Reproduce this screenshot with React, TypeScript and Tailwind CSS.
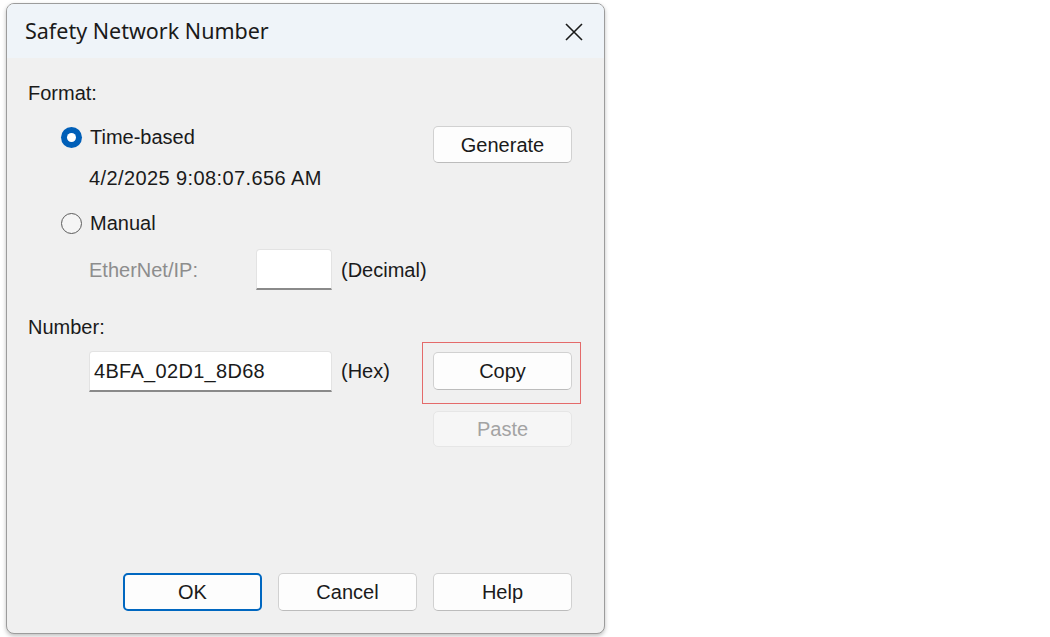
import React from "react"

const bodyFont = { fontFamily: '"Liberation Sans", Arial, sans-serif' }
const titleFont = { fontFamily: '"Segoe UI", "Noto Sans", Arial, sans-serif' }

function Radio({ checked, label }: { checked?: boolean; label: string }) {
  return (
    <div className="flex h-6 items-center">
      {checked ? (
        <span className="flex h-[21px] w-[21px] items-center justify-center rounded-full bg-[#005fb8]">
          <span className="h-[9px] w-[9px] rounded-full bg-white" />
        </span>
      ) : (
        <span className="h-[21px] w-[21px] rounded-full border-[1.5px] border-[#5c5c5c] bg-[#f5f5f5]" />
      )}
      <span className="ml-[8px]">{label}</span>
    </div>
  )
}

function Button({
  children,
  primary,
  disabled,
  className = "",
}: {
  children: React.ReactNode
  primary?: boolean
  disabled?: boolean
  className?: string
}) {
  const tone = primary
    ? "border-2 border-[#0067c0] bg-[#fdfdfd] text-[#1a1a1a]"
    : disabled
      ? "border border-[#e6e6e6] bg-[#f6f6f6] text-[#a3a3a3]"
      : "border border-[#d1d1d1] border-b-[#bcbcbc] bg-[#fdfdfd] text-[#1a1a1a]"
  return (
    <div
      className={`flex w-[139px] items-center justify-center rounded-[5px] ${tone} ${className}`}
    >
      {children}
    </div>
  )
}

function TextBox({ value, className = "" }: { value?: string; className?: string }) {
  return (
    <div
      className={`flex h-[41px] items-center rounded-t-[4px] border border-[#e3e3e3] border-b-2 border-b-[#8a8a8a] bg-white pl-[4px] ${className}`}
    >
      {value}
    </div>
  )
}

export default function App() {
  return (
    <div className="h-[637px] w-[1050px] bg-white pl-[6px] pt-[3px]" style={bodyFont}>
      <div className="flex h-[631px] w-[599px] flex-col overflow-hidden rounded-[8px] border border-[#9c9c9c] bg-[#f0f0f0] text-[20px] text-[#1a1a1a] shadow-[0_2px_4px_rgba(0,0,0,0.25)]">
        {/* title bar */}
        <div className="flex h-[54px] shrink-0 items-center justify-between bg-[#eff4f9] pl-[18px] pr-[20px]">
          <span className="text-[21.5px]" style={titleFont}>
            Safety Network Number
          </span>
          <svg width="20" height="20" viewBox="0 0 20 20" className="mt-[1px]">
            <path d="M2 2 L18 18 M18 2 L2 18" stroke="#1a1a1a" strokeWidth="1.6" />
          </svg>
        </div>

        <div className="flex flex-1 flex-col pl-[21px] pr-[32px]">
          <div className="mt-[23px] h-6 leading-6">Format:</div>

          <div className="mt-[20px] flex items-start justify-between">
            <div className="ml-[33px]">
              <Radio checked label="Time-based" />
              <div className="ml-[28px] mt-[17px] h-6 leading-6 tracking-[0.4px]">
                4/2/2025 9:08:07.656 AM
              </div>
              <div className="mt-[21px]">
                <Radio label="Manual" />
              </div>
            </div>
            <Button className="mt-[1px] h-[37px]">Generate</Button>
          </div>

          <div className="mt-[14px] flex items-center">
            <span className="ml-[61px] w-[167px] text-[#8d8d8d]">EtherNet/IP:</span>
            <TextBox className="w-[76px]" />
            <span className="ml-[9px]">(Decimal)</span>
          </div>

          <div className="mt-[25px] h-6 leading-6">Number:</div>

          <div className="mt-[12px] flex items-start">
            <TextBox value="4BFA_02D1_8D68" className="ml-[61px] w-[243px] tracking-[0.3px]" />
            <span className="ml-[9px] mt-[5px]">(Hex)</span>
            <div className="ml-auto flex flex-col">
              <div className="relative mt-[1px]">
                <div className="pointer-events-none absolute -bottom-[14px] -left-[11px] -right-[9px] -top-[10px] border border-[#e46a6a]" />
                <Button className="h-[38px]">Copy</Button>
              </div>
              <Button disabled className="mt-[21px] h-[36px]">
                Paste
              </Button>
            </div>
          </div>

          <div className="mb-[22px] mt-auto flex justify-end gap-[16px]">
            <Button primary className="h-[38px]">
              OK
            </Button>
            <Button className="h-[38px]">Cancel</Button>
            <Button className="h-[38px]">Help</Button>
          </div>
        </div>
      </div>
    </div>
  )
}
